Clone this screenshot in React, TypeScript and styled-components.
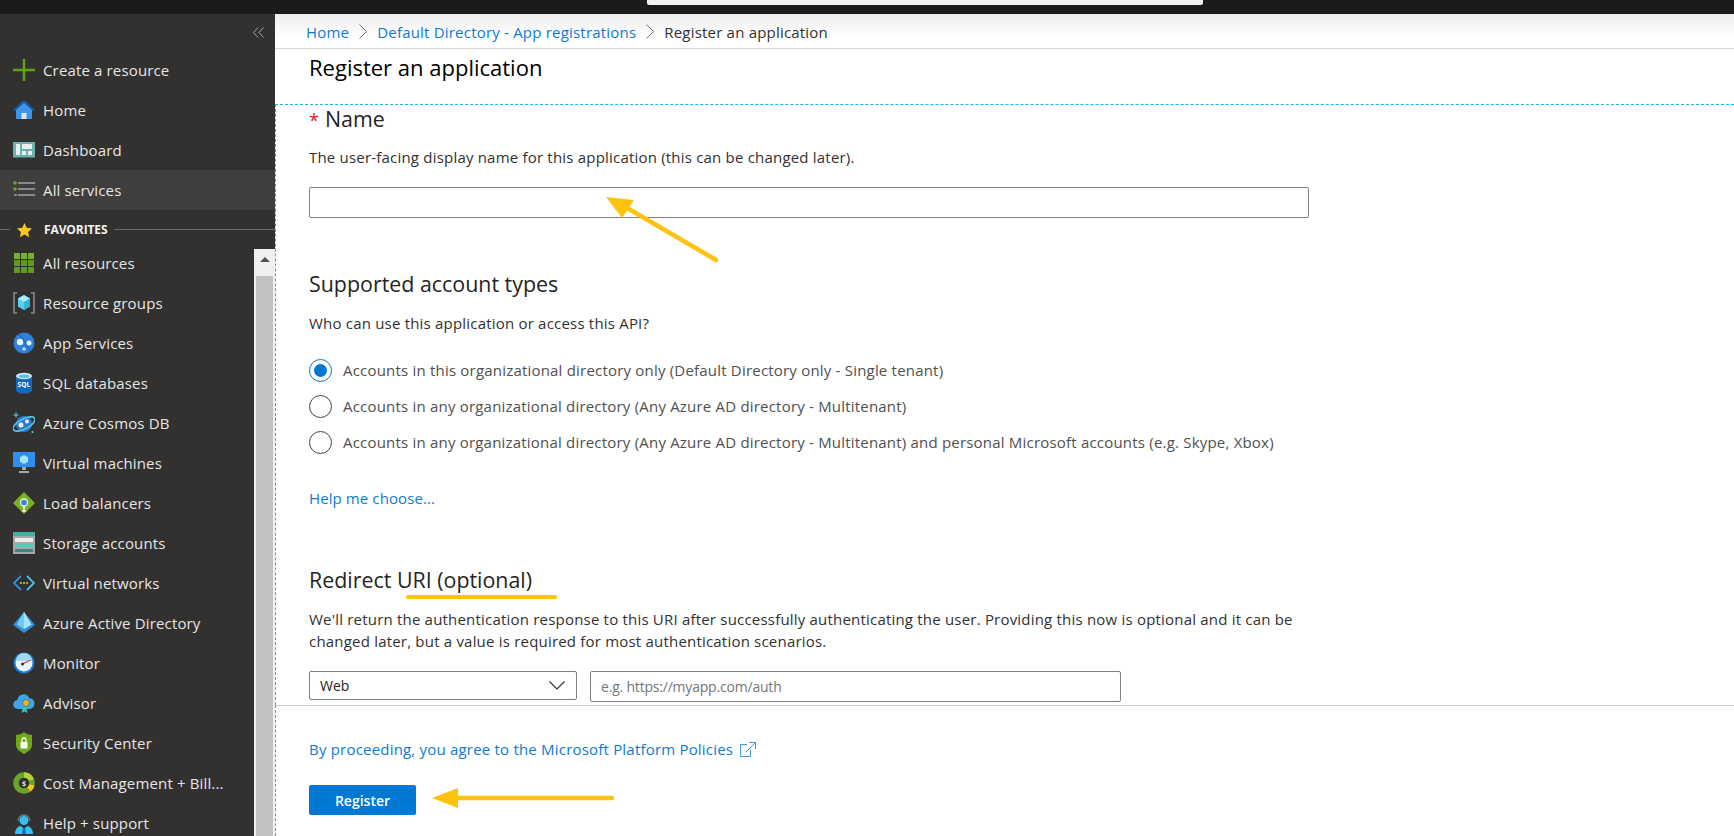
import styled, { createGlobalStyle } from "styled-components";
import type { ReactNode } from "react";

const GlobalStyle = createGlobalStyle`
  html, body {
    margin: 0;
    padding: 0;
    height: 100%;
    overflow: hidden;
    background: #fff;
    font-family: "Open Sans", "Noto Sans", sans-serif;
  }
  * { box-sizing: border-box; }
`;

const Page = styled.div`
  position: relative;
  width: 1734px;
  height: 836px;
  display: flex;
  flex-direction: column;
  overflow: hidden;
`;

const TopBar = styled.div`
  height: 14px;
  flex: none;
  background: #1b1b1b;
  padding-left: 647px;
`;

const SearchStub = styled.div`
  width: 556px;
  height: 5px;
  background: #f2f2f2;
  border-radius: 0 0 2px 2px;
`;

const Body = styled.div`
  flex: 1;
  display: flex;
  min-height: 0;
`;

const Sidebar = styled.nav`
  width: 275px;
  flex: none;
  background: #323130;
  color: #e6e6e6;
  display: flex;
  flex-direction: column;
  overflow: hidden;
`;

const CollapseRow = styled.div`
  height: 36px;
  flex: none;
  display: flex;
  justify-content: flex-end;
  align-items: center;
  padding: 0 11px 0 0;
`;

const NavRow = styled.div<{ $active?: boolean }>`
  height: 40px;
  flex: none;
  display: flex;
  align-items: center;
  gap: 8px;
  padding-left: 13px;
  font-size: 15px;
  letter-spacing: 0.15px;
  background: ${(props) => (props.$active ? "#3f3e3d" : "transparent")};
  white-space: nowrap;
`;

const IconBox = styled.span`
  width: 22px;
  height: 22px;
  flex: none;
  display: flex;
  align-items: center;
  justify-content: center;
`;

const FavoritesRow = styled.div`
  height: 33px;
  flex: none;
  display: flex;
  align-items: center;
  padding-top: 6px;
  font-size: 12px;
  font-weight: 700;
  letter-spacing: -0.1px;
  color: #f2f2f2;
  &::before,
  &::after {
    content: "";
    height: 1px;
    background: #6b6a69;
  }
  &::before {
    width: 10px;
  }
  &::after {
    flex: 1;
    margin-left: 6px;
  }
`;

const FavoritesStar = styled.span`
  display: flex;
  margin: 0 12px 0 7px;
`;

const FavoritesList = styled.div`
  flex: 1;
  display: flex;
  min-height: 0;
`;

const FavoritesItems = styled.div`
  flex: 1;
  min-width: 0;
`;

const Scrollbar = styled.div`
  width: 21px;
  flex: none;
  margin-top: 6px;
  background: #f0f0f0;
  display: flex;
  flex-direction: column;
  align-items: center;
`;

const ScrollUp = styled.div`
  height: 21px;
  flex: none;
  display: flex;
  align-items: center;
  justify-content: center;
`;

const ScrollArrow = styled.div`
  width: 0;
  height: 0;
  border-left: 5px solid transparent;
  border-right: 5px solid transparent;
  border-bottom: 5px solid #505050;
`;

const ScrollThumb = styled.div`
  flex: 1;
  width: 17px;
  margin-top: 6px;
  background: #c1c1c1;
`;

const Main = styled.main`
  flex: 1;
  min-width: 0;
  display: flex;
  flex-direction: column;
  background: #fff;
`;

const Breadcrumbs = styled.div`
  height: 35px;
  flex: none;
  display: flex;
  align-items: center;
  padding: 1px 0 0 31px;
  font-size: 15px;
  letter-spacing: 0.2px;
  background: linear-gradient(#eeeeee, #ffffff 70%);
  border-bottom: 1px solid #d6d6d6;
`;

const Crumb = styled.a`
  color: #0f7ad1;
  text-decoration: none;
`;

const CurrentCrumb = styled.span`
  color: #323130;
`;

const CrumbSeparator = styled.span`
  display: flex;
  width: 28px;
  justify-content: center;
`;

const Header = styled.header`
  height: 55px;
  flex: none;
  padding: 4px 0 0 34px;
`;

const Title = styled.h1`
  margin: 0;
  font-size: 22px;
  line-height: 28px;
  font-weight: 500;
  color: #000;
`;

const Form = styled.div`
  height: 601px;
  flex: none;
  overflow: hidden;
  border-top: 1px dashed #19b5e8;
  border-left: 1px dashed #19b5e8;
  padding-left: 33px;
`;

const SectionTitle = styled.h2<{ $top?: number }>`
  margin: ${(props) => props.$top ?? 0}px 0 0;
  font-size: 21.4px;
  line-height: 28px;
  font-weight: 400;
  color: #252423;
`;

const Required = styled.span`
  color: #e81123;
  font-size: 18px;
  line-height: 0;
  margin-right: 6px;
`;

const Hint = styled.p<{ $top?: number }>`
  margin: ${(props) => props.$top ?? 15}px 0 0;
  max-width: 1000px;
  font-size: 15px;
  letter-spacing: 0.2px;
  line-height: 20px;
  color: #323130;
`;

const WideHint = styled(Hint)`
  line-height: 22px;
`;

const TextInput = styled.input`
  display: block;
  width: 1000px;
  height: 31px;
  margin-top: 20px;
  padding: 0 10px;
  border: 1px solid #7f7f7f;
  border-radius: 2px;
  outline: none;
  background: #fff;
  font: inherit;
`;

const RadioGroup = styled.div`
  margin-top: 19px;
`;

const RadioRow = styled.label`
  height: 36px;
  display: flex;
  align-items: center;
  gap: 11px;
  font-size: 15px;
  letter-spacing: 0.2px;
  color: #505050;
`;

const RadioCircle = styled.span<{ $checked?: boolean }>`
  width: 23px;
  height: 23px;
  flex: none;
  border-radius: 50%;
  border: 1px solid ${(props) => (props.$checked ? "#0078d4" : "#444")};
  display: flex;
  align-items: center;
  justify-content: center;
  &::after {
    content: "";
    display: ${(props) => (props.$checked ? "block" : "none")};
    width: 13px;
    height: 13px;
    border-radius: 50%;
    background: #0078d4;
  }
`;

const HelpLink = styled.a`
  display: block;
  margin-top: 28px;
  font-size: 15px;
  letter-spacing: 0.1px;
  line-height: 20px;
  color: #0f7ad1;
`;

const UriRow = styled.div`
  display: flex;
  align-items: flex-start;
  gap: 13px;
  margin-top: 19px;
`;

const SelectBox = styled.div`
  width: 268px;
  height: 29px;
  display: flex;
  align-items: center;
  justify-content: space-between;
  padding: 0 11px 0 10px;
  border: 1px solid #7f7f7f;
  border-radius: 2px;
  font-size: 14px;
  color: #252423;
`;

const UriInput = styled.input`
  width: 531px;
  height: 31px;
  padding: 0 10px;
  border: 1px solid #7f7f7f;
  border-radius: 2px;
  outline: none;
  font: inherit;
  font-size: 14px;
  letter-spacing: -0.2px;
  color: #252423;
  &::placeholder {
    color: #767676;
    opacity: 1;
  }
`;

const Footer = styled.footer`
  flex: 1;
  border-top: 1px solid #c8c8c8;
  border-left: 1px dashed #19b5e8;
  padding: 33px 0 0 33px;
`;

const PolicyLink = styled.a`
  display: flex;
  align-items: center;
  gap: 7px;
  font-size: 15px;
  letter-spacing: 0.2px;
  line-height: 20px;
  color: #0f7ad1;
`;

const RegisterButton = styled.button`
  display: block;
  width: 107px;
  height: 30px;
  margin-top: 26px;
  padding: 0;
  border: 0;
  border-radius: 2px;
  background: #0078d4;
  color: #fff;
  font: inherit;
  font-size: 14px;
  font-weight: 600;
`;

const AnnotationLayer = styled.svg`
  position: absolute;
  left: 0;
  top: 0;
  pointer-events: none;
`;

const Ic = ({ children }: { children: ReactNode }) => (
  <IconBox>
    <svg width="22" height="22" viewBox="0 0 22 22">
      {children}
    </svg>
  </IconBox>
);

const PlusIcon = () => (
  <Ic>
    <path d="M0 11h22M11 0v22" stroke="#5ea40e" strokeWidth="2.500" />
  </Ic>
);

const HomeIcon = () => (
  <Ic>
    <path d="M3 10 11 3l8 7v9a1 1 0 0 1-1 1H4a1 1 0 0 1-1-1z" fill="#3f94e8" />
    <path d="M0 11 11 1l11 10-2 1-9-8-9 8z" fill="#125ea8" />
    <path d="M8.5 14h5v6h-5z" fill="#e4e4e4" />
  </Ic>
);

const DashboardIcon = () => (
  <Ic>
    <path d="M0 1h22v15.500H0z" fill="#68b3ad" transform="translate(0 2)" />
    <path d="M3 5h4v11H3zM9 5h10v5H9zM9 12h4v4H9zM15 12h4v4h-4z" fill="#e8f0ef" />
  </Ic>
);

const ServicesIcon = () => (
  <Ic>
    <path d="M5 4h17M5 10h17M5 16h17" stroke="#8a8a8a" strokeWidth="2" />
    <circle cx="2" cy="4" r="1.800" fill="#6aa52a" />
    <circle cx="2" cy="10" r="1.800" fill="#6aa52a" />
    <path d="M1 16h3" stroke="#8a8a8a" strokeWidth="2" />
  </Ic>
);

const GridIcon = () => (
  <Ic>
    {[1, 8, 15].map((y) =>
      [1, 8, 15].map((x) => (
        <rect key={`${x}-${y}`} x={x} y={y} width="6" height="6" rx="0.500" fill={y === 1 ? "#76b32e" : "#5e9c20"} />
      )),
    )}
  </Ic>
);

const ResourceGroupIcon = () => (
  <Ic>
    <path d="M4 1H1v20h3M18 1h3v20h-3" fill="none" stroke="#8a8a8a" strokeWidth="1.600" />
    <path d="m11 3 6 3.500v8L11 18l-6-3.500v-8z" fill="#59d0ea" />
    <path d="m11 3 6 3.500-6 3.500-6-3.500z" fill="#a5ecf8" />
    <path d="m11 10 6-3.500v8L11 18z" fill="#32b4d6" />
  </Ic>
);

const AppServicesIcon = () => (
  <Ic>
    <circle cx="11" cy="11" r="10.500" fill="#2f7fdc" />
    <path d="M6 2.500C11 8 15 15 17 19" stroke="#185ba6" strokeWidth="1" fill="none" />
    <circle cx="7" cy="10" r="3.200" fill="#e8f2fb" />
    <circle cx="16" cy="11" r="2.500" fill="#e8f2fb" />
    <circle cx="11" cy="17" r="1.800" fill="#bcd9f5" />
  </Ic>
);

const SqlIcon = () => (
  <Ic>
    <path d="M3 4v14c0 2 3.500 3.500 8 3.500s8-1.500 8-3.500V4z" fill="#1569bd" />
    <ellipse cx="11" cy="4" rx="8" ry="3.300" fill="#d8e6f0" />
    <ellipse cx="11" cy="4.300" rx="5.500" ry="1.800" fill="#52c7e8" />
    <text x="11" y="15" textAnchor="middle" fontSize="6.500" fontWeight="700" fill="#fff" fontFamily="Open Sans, sans-serif">
      SQL
    </text>
  </Ic>
);

const CosmosIcon = () => (
  <Ic>
    <circle cx="11" cy="12" r="8" fill="#2a78d0" />
    <ellipse cx="11" cy="12" rx="12" ry="5" fill="none" stroke="#59c6ec" strokeWidth="1.600" transform="rotate(-28 11 12)" />
    <circle cx="8" cy="13" r="2.500" fill="#f0f6fc" />
    <circle cx="14" cy="9.500" r="2" fill="#f0f6fc" />
    <path d="M3 0.500v5M0.500 3h5" stroke="#59d6f0" strokeWidth="1" />
    <circle cx="19.500" cy="20" r="1" fill="#59d6f0" />
  </Ic>
);

const VmIcon = () => (
  <Ic>
    <path d="M0 0h22v15H0z" fill="#2f8fee" />
    <path d="m11 3 4 2.200v4.600L11 12l-4-2.200V5.200z" fill="#a6e4f8" />
    <path d="M9 15h4v3H9zM6 19h10v2H6z" fill="#a8a8a8" />
  </Ic>
);

const LoadBalancerIcon = () => (
  <Ic>
    <path d="M11 0 22 11 11 22 0 11z" fill="#78b41e" />
    <path d="M11 13v6M9 19h4" stroke="#fff" strokeWidth="1.500" />
    <circle cx="11" cy="10.500" r="3.500" fill="#3b82dc" stroke="#e6f0fa" strokeWidth="1.300" />
  </Ic>
);

const StorageIcon = () => (
  <Ic>
    <path d="M0 0h22v4H0z" fill="#37b5a5" />
    <path d="M0 4h22v18H0z" fill="#a8a8a8" />
    <path d="M2 6h18v4H2z" fill="#e8ecec" />
    <path d="M2 12h18v3H2z" fill="#5cc4b8" />
    <path d="M2 17h18v3H2z" fill="#2d8f84" />
  </Ic>
);

const VnetIcon = () => (
  <Ic>
    <path d="M8 4 1 11l7 7" fill="none" stroke="#2c8fe4" strokeWidth="1.800" />
    <path d="m14 4 7 7-7 7" fill="none" stroke="#4dbcee" strokeWidth="1.800" />
    <path d="M7 11h1.800M10.100 11h1.800M13.200 11H15" stroke="#8fce3c" strokeWidth="1.800" />
  </Ic>
);

const DirectoryIcon = () => (
  <Ic>
    <path d="M11 0 0 13l11 8 11-8z" fill="#2f8fdc" />
    <path d="M11 0 3.500 12.500 11 17l7.500-4.500z" fill="#74c8f4" />
    <path d="M11 0v17l7.500-4.500z" fill="#a6e2fa" />
  </Ic>
);

const MonitorIcon = () => (
  <Ic>
    <circle cx="11" cy="11" r="10.500" fill="#1c7ad8" />
    <circle cx="11" cy="11" r="8.500" fill="#eaf6fc" />
    <path d="M3 9a8 8 0 0 1 16 0z" fill="#9cdcf4" />
    <path d="m9.500 12 8-4" stroke="#d9423a" strokeWidth="1.300" />
    <circle cx="9.500" cy="12" r="1.500" fill="#333" />
  </Ic>
);

const AdvisorIcon = () => (
  <Ic>
    <path d="M5 17a4.500 4.500 0 0 1-.5-9 6 6 0 0 1 11.500-2 5.500 5.500 0 0 1 0 11z" fill="#3fa4ea" />
    <path d="m10 14-1.500 7 3-1.500 3 1.500-1.500-7z" fill="#2fc2b4" />
    <circle cx="13" cy="11" r="3.400" fill="#f5b70f" stroke="#1f6fb8" strokeWidth="0.800" />
  </Ic>
);

const SecurityIcon = () => (
  <Ic>
    <path d="M3 3c3 0 6-1 8-3 2 2 5 3 8 3v10c0 4-4 7-8 9-4-2-8-5-8-9z" fill="#6fa81c" />
    <path d="M7.500 10h7v6.500h-7z" fill="#f4f8ec" />
    <path d="M9 10V8a2 2 0 0 1 4 0v2" fill="none" stroke="#f4f8ec" strokeWidth="1.300" />
  </Ic>
);

const CostIcon = () => (
  <Ic>
    <circle cx="11" cy="11" r="8" fill="none" stroke="#6aa52a" strokeWidth="5.500" />
    <path d="M11 3a8 8 0 0 1 7.400 5" fill="none" stroke="#b2d235" strokeWidth="5.500" />
    <path d="M18.800 12.800a8 8 0 0 1-3 4.600" fill="none" stroke="#f5c518" strokeWidth="5.500" />
    <circle cx="11" cy="11" r="5" fill="#323130" />
    <text x="11" y="13.500" textAnchor="middle" fontSize="7" fontWeight="700" fill="#ddd" fontFamily="Open Sans, sans-serif">
      $
    </text>
  </Ic>
);

const HelpIcon = () => (
  <Ic>
    <path d="M5 9a6 6 0 0 1 12 0" fill="none" stroke="#777" strokeWidth="1.300" />
    <circle cx="11" cy="8.500" r="4.500" fill="#35c0ee" />
    <path d="M2 22c0-5 3-8 6-8l3 3 3-3c3 0 6 3 6 8z" fill="#35c0ee" />
    <path d="m10 15 1 2 1-2 .8 7H9.200z" fill="#136fa8" />
  </Ic>
);

const CrumbChevron = () => (
  <CrumbSeparator>
    <svg width="8" height="15" viewBox="0 0 8 15">
      <path d="m.5 .5 7 7-7 7" fill="none" stroke="#6f6f6f" strokeWidth="1" />
    </svg>
  </CrumbSeparator>
);

const topItems = [
  { label: "Create a resource", icon: <PlusIcon /> },
  { label: "Home", icon: <HomeIcon /> },
  { label: "Dashboard", icon: <DashboardIcon /> },
  { label: "All services", icon: <ServicesIcon />, active: true },
];

const favorites = [
  { label: "All resources", icon: <GridIcon /> },
  { label: "Resource groups", icon: <ResourceGroupIcon /> },
  { label: "App Services", icon: <AppServicesIcon /> },
  { label: "SQL databases", icon: <SqlIcon /> },
  { label: "Azure Cosmos DB", icon: <CosmosIcon /> },
  { label: "Virtual machines", icon: <VmIcon /> },
  { label: "Load balancers", icon: <LoadBalancerIcon /> },
  { label: "Storage accounts", icon: <StorageIcon /> },
  { label: "Virtual networks", icon: <VnetIcon /> },
  { label: "Azure Active Directory", icon: <DirectoryIcon /> },
  { label: "Monitor", icon: <MonitorIcon /> },
  { label: "Advisor", icon: <AdvisorIcon /> },
  { label: "Security Center", icon: <SecurityIcon /> },
  { label: "Cost Management + Bill...", icon: <CostIcon /> },
  { label: "Help + support", icon: <HelpIcon /> },
];

const accountTypes = [
  "Accounts in this organizational directory only (Default Directory only - Single tenant)",
  "Accounts in any organizational directory (Any Azure AD directory - Multitenant)",
  "Accounts in any organizational directory (Any Azure AD directory - Multitenant) and personal Microsoft accounts (e.g. Skype, Xbox)",
];

export default function App() {
  return (
    <Page>
      <GlobalStyle />
      <TopBar>
        <SearchStub />
      </TopBar>
      <Body>
        <Sidebar>
          <CollapseRow>
            <svg width="11" height="11" viewBox="0 0 11 11">
              <path d="M5 .5 .5 5.500 5 10.500M10.500 .5 6 5.500l4.500 5" fill="none" stroke="#a8a8a8" strokeWidth="1" />
            </svg>
          </CollapseRow>
          {topItems.map((item) => (
            <NavRow key={item.label} $active={item.active}>
              {item.icon}
              {item.label}
            </NavRow>
          ))}
          <FavoritesRow>
            <FavoritesStar>
              <svg width="15" height="14" viewBox="0 0 15 14">
                <path d="m7.500 0 2.200 4.800 5.300.6-3.900 3.600 1 5.200-4.600-2.600L2.900 14.200l1-5.200L0 5.400l5.300-.6z" fill="#f8c61c" />
              </svg>
            </FavoritesStar>
            FAVORITES
          </FavoritesRow>
          <FavoritesList>
            <FavoritesItems>
              {favorites.map((item) => (
                <NavRow key={item.label}>
                  {item.icon}
                  {item.label}
                </NavRow>
              ))}
            </FavoritesItems>
            <Scrollbar>
              <ScrollUp>
                <ScrollArrow />
              </ScrollUp>
              <ScrollThumb />
            </Scrollbar>
          </FavoritesList>
        </Sidebar>
        <Main>
          <Breadcrumbs>
            <Crumb>Home</Crumb>
            <CrumbChevron />
            <Crumb>Default Directory - App registrations</Crumb>
            <CrumbChevron />
            <CurrentCrumb>Register an application</CurrentCrumb>
          </Breadcrumbs>
          <Header>
            <Title>Register an application</Title>
          </Header>
          <Form>
            <SectionTitle>
              <Required>*</Required>Name
            </SectionTitle>
            <Hint $top={14}>The user-facing display name for this application (this can be changed later).</Hint>
            <TextInput />
            <SectionTitle $top={52}>Supported account types</SectionTitle>
            <Hint>Who can use this application or access this API?</Hint>
            <RadioGroup>
              {accountTypes.map((label, index) => (
                <RadioRow key={label}>
                  <RadioCircle $checked={index === 0} />
                  {label}
                </RadioRow>
              ))}
            </RadioGroup>
            <HelpLink>Help me choose...</HelpLink>
            <SectionTitle $top={58}>Redirect URI (optional)</SectionTitle>
            <WideHint $top={14}>
              We'll return the authentication response to this URI after successfully authenticating the user. Providing this now is optional and it can be changed later, but a value is required for most authentication scenarios.
            </WideHint>
            <UriRow>
              <SelectBox>
                Web
                <svg width="16" height="9" viewBox="0 0 16 9">
                  <path d="m.5.5 7.500 7.500L15.500.5" fill="none" stroke="#333" strokeWidth="1.200" />
                </svg>
              </SelectBox>
              <UriInput placeholder="e.g. https://myapp.com/auth" />
            </UriRow>
          </Form>
          <Footer>
            <PolicyLink>
              By proceeding, you agree to the Microsoft Platform Policies
              <svg width="16" height="15" viewBox="0 0 16 15">
                <path d="M7 2.500H.5v12h10V8M9 .5h6.500V7M15.500.5 6 10" fill="none" stroke="#3b9ae0" strokeWidth="1" />
              </svg>
            </PolicyLink>
            <RegisterButton>Register</RegisterButton>
          </Footer>
        </Main>
      </Body>
      <AnnotationLayer width="1734" height="836" viewBox="0 0 1734 836">
        <path d="M716 260 622 205" stroke="#ffc20e" strokeWidth="4.500" strokeLinecap="round" />
        <path d="m606 197 28 3-12 18z" fill="#ffc20e" />
        <path d="M408 597h147" stroke="#ffc20e" strokeWidth="4" strokeLinecap="round" />
        <path d="M612 798H450" stroke="#ffc20e" strokeWidth="4.500" strokeLinecap="round" />
        <path d="m432 798 26-10v20z" fill="#ffc20e" />
      </AnnotationLayer>
    </Page>
  );
}
